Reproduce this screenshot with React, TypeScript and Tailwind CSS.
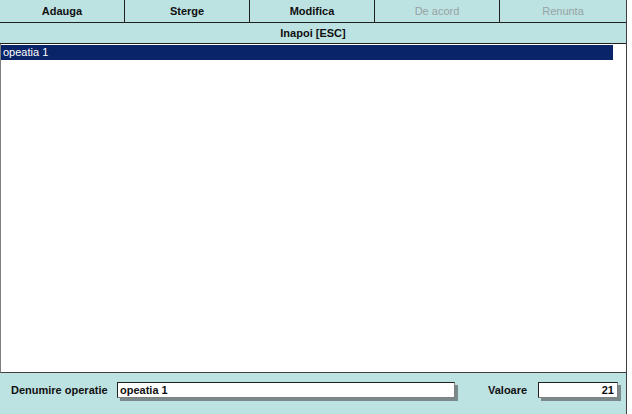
import React from "react";

const font = { fontFamily: '"Liberation Sans", Arial, sans-serif' };

function Btn({ label, disabled, last }: { label: string; disabled?: boolean; last?: boolean }) {
  return (
    <div
      className={
        "flex h-full items-center justify-center text-[11px] font-bold " +
        (last ? "w-[126px] " : "w-[125px] border-r border-[#202020] ") +
        (disabled ? "text-[#97a3a3] font-normal" : "text-[#101010]")
      }
    >
      {label}
    </div>
  );
}

export default function App() {
  return (
    <div className="w-[632px] h-[414px] bg-white overflow-hidden" style={font}>
      <div className="w-[627px] h-[414px] flex flex-col border-r border-[#404040] bg-[#bde2e2]">
        <div className="flex h-[23px] border-b border-[#202020]">
          <Btn label="Adauga" />
          <Btn label="Sterge" />
          <Btn label="Modifica" />
          <Btn label="De acord" disabled />
          <Btn label="Renunta" disabled last />
        </div>
        <div className="flex h-[21px] items-center justify-center border-b border-[#202020] text-[11px] font-bold text-[#101010]">
          Inapoi [ESC]
        </div>
        <div className="flex-1 bg-white border-l border-[#808080] border-b border-b-[#404040] pt-[1px]">
          <div className="w-[612px] h-[15px] bg-[#0a246a] text-white text-[11px] leading-[15px] pl-[2px]">
            opeatia 1
          </div>
        </div>
        <div className="h-[41px] flex items-center pl-[11px] pb-[7px]">
          <div className="w-[106px] text-[11px] font-bold text-[#101010]">Denumire operatie</div>
          <div className="relative">
            <div className="absolute left-[3px] top-[3px] w-[338px] h-[16px] bg-[#7a8a8a]" />
            <div className="relative w-[338px] h-[16px] bg-white border border-[#202020] border-r-[#808080] border-b-[#808080] text-[11px] font-bold leading-[14px] pl-[2px] text-[#101010]">
              opeatia 1
            </div>
          </div>
          <div className="ml-[33px] w-[50px] text-[11px] font-bold text-[#101010]">Valoare</div>
          <div className="relative">
            <div className="absolute left-[3px] top-[3px] w-[80px] h-[16px] bg-[#7a8a8a]" />
            <div className="relative w-[80px] h-[16px] bg-white border border-[#202020] border-r-[#808080] border-b-[#808080] text-[11px] font-bold leading-[14px] pr-[3px] text-right text-[#101010]">
              21
            </div>
          </div>
        </div>
      </div>
    </div>
  );
}
